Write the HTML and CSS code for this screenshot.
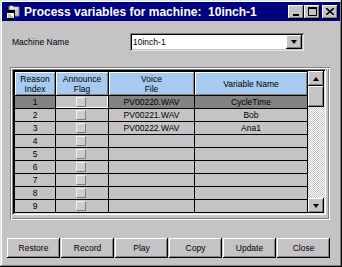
FILE: index.html
```html
<!DOCTYPE html>
<html lang="en">
<head>
    <meta charset="UTF-8">
    <title>Process variables for machine: 10inch-1</title>
    <link rel="stylesheet" href="styles.css">
</head>
<body>
    <div class="window">
        <div class="titlebar">
            <svg class="title-icon" width="16" height="16" viewBox="0 0 16 16">
                <path d="M4 2h4l1 1h5v9H4z" fill="#c6c3c6" stroke="#808080"/>
                <path d="M5 3h3M5 4h8" stroke="#fff"/>
                <rect x="1.5" y="6.5" width="8" height="8" fill="#fff" stroke="#000"/>
                <rect x="2" y="7" width="7" height="2" fill="#000"/>
                <path d="M3 11h3M3 13h5" stroke="#808080"/>
            </svg>
            <span class="title">Process variables for machine:  10inch-1</span>
            <div class="caption-btns">
                <div class="cap-btn">
                    <svg width="8" height="8" viewBox="0 0 8 8"><rect x="1" y="6" width="6" height="2" fill="#000"/></svg>
                </div>
                <div class="cap-btn">
                    <svg width="9" height="9" viewBox="0 0 9 9"><path d="M0.5 0.5h8v8h-8z" fill="none" stroke="#000"/><rect x="0" y="0" width="9" height="2" fill="#000"/></svg>
                </div>
                <div class="cap-btn close">
                    <svg width="8" height="7" viewBox="0 0 8 7"><path d="M0 0l8 7M8 0L0 7" stroke="#000" stroke-width="1.6"/></svg>
                </div>
            </div>
        </div>

        <div class="field-row">
            <label class="field-label">Machine Name</label>
            <div class="select">
                <span>10inch-1</span>
                <div class="select-btn"><span class="arrow-down"></span></div>
            </div>
        </div>

        <div class="group">
            <div class="grid-frame">
                <div class="grid">
                    <div class="cell head">Reason<br>Index</div>
                    <div class="cell head">Announce<br>Flag</div>
                    <div class="cell head">Voice<br>File</div>
                    <div class="cell head">Variable Name</div>

                    <div class="cell sel">1</div>
                    <div class="cell focus"><span class="check"></span></div>
                    <div class="cell sel">PV00220.WAV</div>
                    <div class="cell sel">CycleTime</div>

                    <div class="cell">2</div>
                    <div class="cell"><span class="check"></span></div>
                    <div class="cell">PV00221.WAV</div>
                    <div class="cell">Bob</div>

                    <div class="cell">3</div>
                    <div class="cell"><span class="check"></span></div>
                    <div class="cell">PV00222.WAV</div>
                    <div class="cell">Ana1</div>

                    <div class="cell">4</div>
                    <div class="cell"><span class="check"></span></div>
                    <div class="cell"></div>
                    <div class="cell"></div>

                    <div class="cell">5</div>
                    <div class="cell"><span class="check"></span></div>
                    <div class="cell"></div>
                    <div class="cell"></div>

                    <div class="cell">6</div>
                    <div class="cell"><span class="check"></span></div>
                    <div class="cell"></div>
                    <div class="cell"></div>

                    <div class="cell">7</div>
                    <div class="cell"><span class="check"></span></div>
                    <div class="cell"></div>
                    <div class="cell"></div>

                    <div class="cell">8</div>
                    <div class="cell"><span class="check"></span></div>
                    <div class="cell"></div>
                    <div class="cell"></div>

                    <div class="cell">9</div>
                    <div class="cell"><span class="check"></span></div>
                    <div class="cell"></div>
                    <div class="cell"></div>
                </div>
                <div class="scrollbar">
                    <div class="sb-btn"><span class="arrow-up"></span></div>
                    <div class="sb-thumb"></div>
                    <div class="sb-track"></div>
                    <div class="sb-btn"><span class="arrow-down"></span></div>
                </div>
            </div>
        </div>

        <div class="button-row">
            <button class="btn">Restore</button>
            <button class="btn">Record</button>
            <button class="btn">Play</button>
            <button class="btn">Copy</button>
            <button class="btn">Update</button>
            <button class="btn">Close</button>
        </div>
    </div>
</body>
</html>
```

FILE: styles.css
```css
body {
    margin: 0;
    font-family: "Liberation Sans", Arial, sans-serif;
    background-color: #c6c3c6;
    color: #000;
}
.window {
    width: 342px;
    height: 267px;
    box-sizing: border-box;
    padding: 2px;
    display: flex;
    flex-direction: column;
    background-color: #c6c3c6;
    box-shadow: inset -1px -1px #000, inset 1px 1px #dfe8df, inset -2px -2px #808080, inset 2px 2px #fff;
}
.titlebar {
    height: 19px;
    background-color: #000080; /* azul marinho */
    display: flex;
    align-items: center;
    padding: 0 2px 0 3px;
}
.title-icon {
    margin-right: 3px;
}
.title {
    flex: 1;
    color: #fff;
    font-weight: bold;
    font-size: 12px;
    white-space: pre;
}
.caption-btns {
    display: flex;
}
.cap-btn {
    width: 16px;
    height: 14px;
    box-sizing: border-box;
    display: flex;
    align-items: center;
    justify-content: center;
    background-color: #c6c3c6;
    box-shadow: inset -1px -1px #000, inset 1px 1px #fff, inset -2px -2px #808080;
}
.cap-btn.close {
    margin-left: 2px;
}
.field-row {
    display: flex;
    align-items: center;
    height: 18px;
    margin-top: 12px;
    padding-left: 10px;
    font-size: 8.5px;
}
.field-label {
    width: 118px;
}
.select {
    width: 174px;
    height: 18px;
    box-sizing: border-box;
    padding: 2px 2px 2px 3px;
    display: flex;
    align-items: center;
    justify-content: space-between;
    background-color: #fff;
    box-shadow: inset 1px 1px #808080, inset -1px -1px #dfe8df, inset 2px 2px #000, inset -2px -2px #c6c3c6;
}
.select-btn {
    width: 16px;
    height: 14px;
    display: flex;
    align-items: center;
    justify-content: center;
    background-color: #c6c3c6;
    box-shadow: inset -1px -1px #000, inset 1px 1px #fff, inset -2px -2px #808080;
}
.arrow-down, .arrow-up {
    width: 0;
    height: 0;
    border-left: 3.5px solid transparent;
    border-right: 3.5px solid transparent;
}
.arrow-down {
    border-top: 4px solid #000;
}
.arrow-up {
    border-bottom: 4px solid #000;
}
.group {
    width: 320px;
    height: 153px;
    box-sizing: border-box;
    margin: 16px 0 0 8px;
    padding: 2px;
    box-shadow: inset 1px 1px #808080, inset -1px -1px #fff, inset 2px 2px #fff, inset -2px -2px #808080;
}
.grid-frame {
    display: flex;
    width: fit-content;
    padding: 2px;
    box-shadow: inset 1px 1px #808080, inset -1px -1px #fff, inset 2px 2px #000, inset -2px -2px #dfdfdf;
}
.grid {
    display: grid;
    grid-template-columns: 40px 52px 85px 112px;
    grid-template-rows: 23px repeat(9, 12px);
    gap: 1px;
    padding: 1px;
    background-color: #000;
}
.cell {
    display: flex;
    align-items: center;
    justify-content: center;
    text-align: center;
    font-size: 8.5px;
    line-height: 10px;
    background-color: #c6c3c6;
}
.cell.head {
    background-color: #a6caf0; /* azul claro */
    box-shadow: inset 1px 1px #fff, inset -1px -1px #808080;
}
.cell.sel {
    background-color: #848284;
}
.cell.focus {
    box-shadow: inset -1px -1px #fff;
}
.check {
    width: 10px;
    height: 10px;
    box-sizing: border-box;
    margin-right: 3px;
    background-color: #d0cdd0;
    border: 1px solid;
    border-color: #f0f0f0 #808080 #808080 #f0f0f0;
}
.scrollbar {
    width: 16px;
    display: flex;
    flex-direction: column;
    background-color: #fff;
    background-image: repeating-conic-gradient(#c6c3c6 0 25%, #fff 0 50%);
    background-size: 2px 2px;
}
.sb-btn {
    height: 15px;
    display: flex;
    align-items: center;
    justify-content: center;
    background-color: #c6c3c6;
    box-shadow: inset -1px -1px #000, inset 1px 1px #fff, inset -2px -2px #808080;
}
.sb-thumb {
    height: 21px;
    background-color: #c6c3c6;
    box-shadow: inset -1px -1px #000, inset 1px 1px #fff, inset -2px -2px #808080;
}
.sb-track {
    flex: 1;
}
.button-row {
    display: flex;
    gap: 1px;
    margin-top: 18px;
    padding-left: 5px;
}
.btn {
    width: 53px;
    height: 20px;
    padding: 0;
    border: none;
    font-family: "Liberation Sans", Arial, sans-serif;
    font-size: 8.5px;
    color: #000;
    background-color: #c6c3c6;
    box-shadow: inset -1px -1px #000, inset 1px 1px #fff, inset -2px -2px #808080;
}
```
